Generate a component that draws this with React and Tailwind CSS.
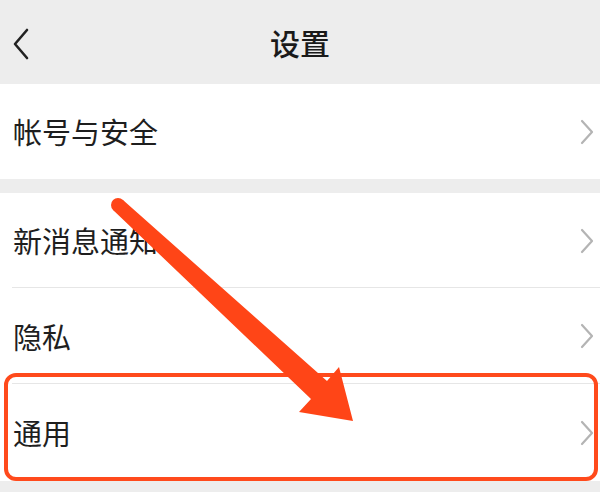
import React from "react";

function Chevron() {
  return (
    <svg width="14" height="26" viewBox="0 0 14 26" className="shrink-0">
      <path d="M2 2 L12 13 L2 24" fill="none" stroke="#b4b4b4" strokeWidth="2.2" strokeLinecap="round" strokeLinejoin="round" />
    </svg>
  );
}

function Row({ label, h, divider }) {
  return (
    <div className={`relative flex items-center justify-between bg-white pl-[13px] pr-[6px] ${h}`}>
      <span className="text-[29px] leading-none text-[#1e1e1e]">{label}</span>
      <Chevron />
      {divider && <div className="absolute bottom-0 left-[12px] right-0 h-px bg-[#e6e6e6]" />}
    </div>
  );
}

export default function App() {
  return (
    <div
      className="relative w-[600px] h-[492px] overflow-hidden bg-[#ededed]"
      style={{ fontFamily: '"Noto Sans CJK SC", "Noto Sans", sans-serif' }}
    >
      <div className="relative flex h-[84px] items-center justify-center">
        <svg width="20" height="32" viewBox="0 0 20 32" className="absolute left-[11px] top-[28px]">
          <path d="M16 2 L4 16 L16 30" fill="none" stroke="#222" strokeWidth="2.6" strokeLinecap="round" strokeLinejoin="round" />
        </svg>
        <span className="text-[30px] font-medium leading-none text-[#1a1a1a]">设置</span>
      </div>
      <Row label="帐号与安全" h="h-[95px]" />
      <div className="h-[14px]" />
      <Row label="新消息通知" h="h-[95px]" divider />
      <Row label="隐私" h="h-[96px]" divider />
      <Row label="通用" h="h-[97px]" />

      <div className="pointer-events-none absolute left-[4px] top-[373px] h-[108px] w-[594px] rounded-[12px] border-[4px] border-[#ff4a1c]" />

      <svg className="pointer-events-none absolute left-0 top-0" width="600" height="492" viewBox="0 0 600 492">
        <circle cx="118" cy="205" r="7" fill="#ff4517" />
        <polygon
          points="122.7,199.8 327,381 339,367 353,421 299,412 311,399 113.3,210.2"
          fill="#ff4517"
        />
      </svg>
    </div>
  );
}
